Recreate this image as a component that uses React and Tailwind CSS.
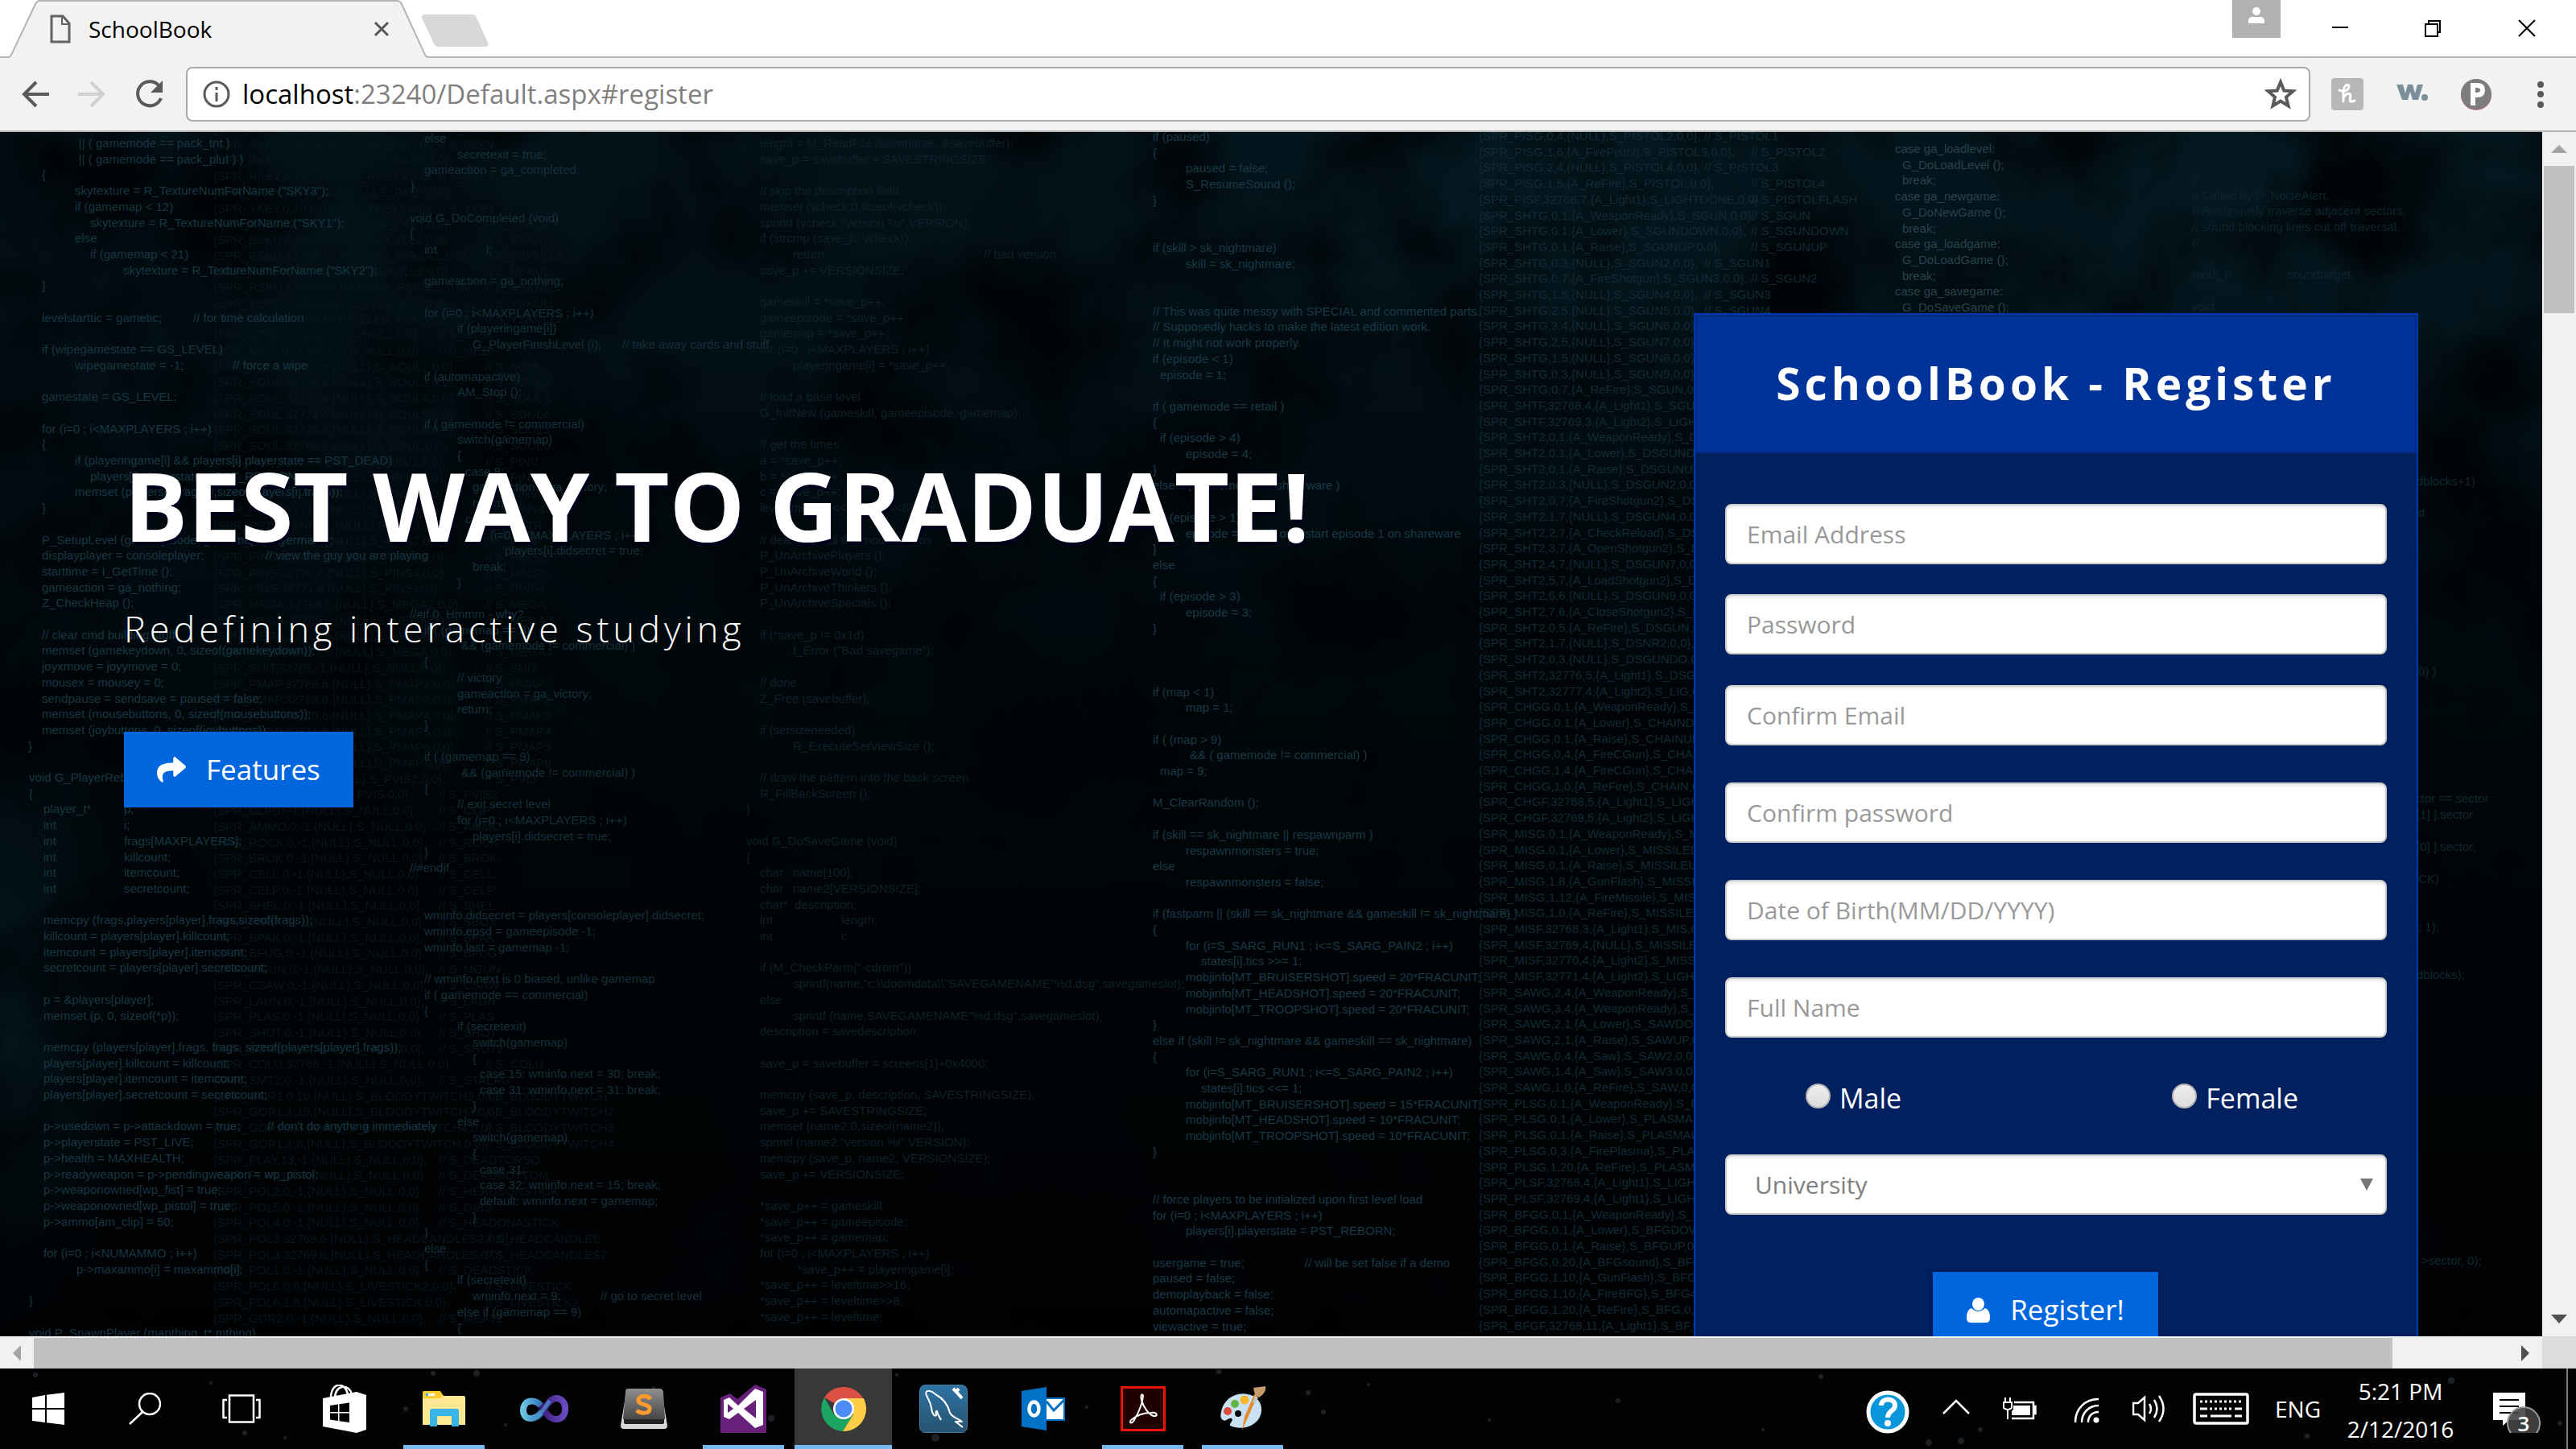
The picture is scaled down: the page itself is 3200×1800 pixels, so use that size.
import React from "react";
import { FaShare, FaUser } from "react-icons/fa";

/* ---------- code wallpaper ---------- */

// "~n~" moves the pen to n pixels from the column's left edge
const colGame = [
  "           || ( gamemode == pack_tnt )",
  "           || ( gamemode == pack_plut ) )",
  "{",
  '~41~skytexture = R_TextureNumForName ("SKY3");',
  "~41~if (gamemap < 12)",
  '~60~skytexture = R_TextureNumForName ("SKY1");',
  "~41~else",
  "~60~if (gamemap < 21)",
  '~101~skytexture = R_TextureNumForName ("SKY2");',
  "}",
  "",
  "levelstarttic = gametic;~188~// for time calculation",
  "",
  "if (wipegamestate == GS_LEVEL)",
  "~41~wipegamestate = -1;~237~// force a wipe",
  "",
  "gamestate = GS_LEVEL;",
  "",
  "for (i=0 ; i<MAXPLAYERS ; i++)",
  "{",
  "~41~if (playeringame[i] && players[i].playerstate == PST_DEAD)",
  "~60~players[i].playerstate = PST_REBORN;",
  "~41~memset (players[i].frags,0,sizeof(players[i].frags));",
  "}",
  "",
  "P_SetupLevel (gameepisode, gamemap, playermask);",
  "displayplayer = consoleplayer;~278~// view the guy you are playing",
  "starttime = I_GetTime ();",
  "gameaction = ga_nothing;",
  "Z_CheckHeap ();",
  "",
  "// clear cmd building stuff",
  "memset (gamekeydown, 0, sizeof(gamekeydown));",
  "joyxmove = joyymove = 0;",
  "mousex = mousey = 0;",
  "sendpause = sendsave = paused = false;",
  "memset (mousebuttons, 0, sizeof(mousebuttons));",
  "memset (joybuttons, 0, sizeof(joybuttons));",
  "~-17~}",
  "",
  "~-16~void G_PlayerReborn (int player)",
  "~-16~{",
  "~2~player_t*~102~p;",
  "~2~int~102~i;",
  "~2~int~102~frags[MAXPLAYERS];",
  "~2~int~102~killcount;",
  "~2~int~102~itemcount;",
  "~2~int~102~secretcount;",
  "",
  "~2~memcpy (frags,players[player].frags,sizeof(frags));",
  "~2~killcount = players[player].killcount;",
  "~2~itemcount = players[player].itemcount;",
  "~2~secretcount = players[player].secretcount;",
  "",
  "~2~p = &players[player];",
  "~2~memset (p, 0, sizeof(*p));",
  "",
  "~2~memcpy (players[player].frags, frags, sizeof(players[player].frags));",
  "~2~players[player].killcount = killcount;",
  "~2~players[player].itemcount = itemcount;",
  "~2~players[player].secretcount = secretcount;",
  "",
  "~2~p->usedown = p->attackdown = true;~280~// don't do anything immediately",
  "~2~p->playerstate = PST_LIVE;",
  "~2~p->health = MAXHEALTH;",
  "~2~p->readyweapon = p->pendingweapon = wp_pistol;",
  "~2~p->weaponowned[wp_fist] = true;",
  "~2~p->weaponowned[wp_pistol] = true;",
  "~2~p->ammo[am_clip] = 50;",
  "",
  "~2~for (i=0 ; i<NUMAMMO ; i++)",
  "~43~p->maxammo[i] = maxammo[i];",
  "",
  "~-16~}",
  "",
  "~-16~void P_SpawnPlayer (mapthing_t* mthing)",
];

const colFinish = [
  "else",
  "~41~secretexit = true;",
  "gameaction = ga_completed;",
  "~-17~}",
  "",
  "~-18~void G_DoCompleted (void)",
  "~-18~{",
  "int~77~i;",
  "",
  "gameaction = ga_nothing;",
  "",
  "for (i=0 ; i<MAXPLAYERS ; i++)",
  "~41~if (playeringame[i])",
  "~60~G_PlayerFinishLevel (i);~246~// take away cards and stuff",
  "",
  "if (automapactive)",
  "~41~AM_Stop ();",
  "",
  "if ( gamemode != commercial)",
  "~41~switch(gamemap)",
  "~41~{",
  "~51~case 8:",
  "~60~gameaction = ga_victory;",
  "~60~return;",
  "~51~case 9:",
  "~60~for (i=0 ; i<MAXPLAYERS ; i++)",
  "~100~players[i].didsecret = true;",
  "~60~break;",
  "~41~}",
  "",
  "~-18~//#if 0  Hmmm - why?",
  "if ( (gamemap == 8)",
  "~46~&& (gamemode != commercial) )",
  "{",
  "~41~// victory",
  "~41~gameaction = ga_victory;",
  "~41~return;",
  "}",
  "",
  "if ( (gamemap == 9)",
  "~46~&& (gamemode != commercial) )",
  "{",
  "~41~// exit secret level",
  "~41~for (i=0 ; i<MAXPLAYERS ; i++)",
  "~60~players[i].didsecret = true;",
  "}",
  "~-18~//#endif",
  "",
  "",
  "wminfo.didsecret = players[consoleplayer].didsecret;",
  "wminfo.epsd = gameepisode -1;",
  "wminfo.last = gamemap -1;",
  "",
  "// wminfo.next is 0 biased, unlike gamemap",
  "if ( gamemode == commercial)",
  "{",
  "~41~if (secretexit)",
  "~60~switch(gamemap)",
  "~60~{",
  "~69~case 15: wminfo.next = 30; break;",
  "~69~case 31: wminfo.next = 31; break;",
  "~60~}",
  "~41~else",
  "~60~switch(gamemap)",
  "~60~{",
  "~69~case 31:",
  "~69~case 32: wminfo.next = 15; break;",
  "~69~default: wminfo.next = gamemap;",
  "~60~}",
  "}",
  "else",
  "{",
  "~41~if (secretexit)",
  "~60~wminfo.next = 9;~219~// go to secret level",
  "~41~else if (gamemap == 9)",
  "~41~{",
];

const colSave = [
  "length = M_ReadFile (savename, &savebuffer);",
  "save_p = savebuffer + SAVESTRINGSIZE;",
  "",
  "// skip the description field",
  "memset (vcheck,0,sizeof(vcheck));",
  'sprintf (vcheck,"version %i",VERSION);',
  "if (strcmp (save_p, vcheck))",
  "~41~return;~278~// bad version",
  "save_p += VERSIONSIZE;",
  "",
  "gameskill = *save_p++;",
  "gameepisode = *save_p++;",
  "gamemap = *save_p++;",
  "for (i=0 ; i<MAXPLAYERS ; i++)",
  "~41~playeringame[i] = *save_p++;",
  "",
  "// load a base level",
  "G_InitNew (gameskill, gameepisode, gamemap);",
  "",
  "// get the times",
  "a = *save_p++;",
  "b = *save_p++;",
  "c = *save_p++;",
  "leveltime = (a<<16) + (b<<8) + c;",
  "",
  "// dearchive all the modifications",
  "P_UnArchivePlayers ();",
  "P_UnArchiveWorld ();",
  "P_UnArchiveThinkers ();",
  "P_UnArchiveSpecials ();",
  "",
  "if (*save_p != 0x1d)",
  '~41~I_Error ("Bad savegame");',
  "",
  "// done",
  "Z_Free (savebuffer);",
  "",
  "if (setsizeneeded)",
  "~41~R_ExecuteSetViewSize ();",
  "",
  "// draw the pattern into the back screen",
  "R_FillBackScreen ();",
  "~-17~}",
  "",
  "~-17~void G_DoSaveGame (void)",
  "~-17~{",
  "char~41~name[100];",
  "char~41~name2[VERSIONSIZE];",
  "char*  description;",
  "int~101~length;",
  "int~101~i;",
  "",
  'if (M_CheckParm("-cdrom"))',
  '~41~sprintf(name,"c:\\\\doomdata\\\\"SAVEGAMENAME"%d.dsg",savegameslot);',
  "else",
  '~41~sprintf (name,SAVEGAMENAME"%d.dsg",savegameslot);',
  "description = savedescription;",
  "",
  "save_p = savebuffer = screens[1]+0x4000;",
  "",
  "memcpy (save_p, description, SAVESTRINGSIZE);",
  "save_p += SAVESTRINGSIZE;",
  "memset (name2,0,sizeof(name2));",
  'sprintf (name2,"version %i",VERSION);',
  "memcpy (save_p, name2, VERSIONSIZE);",
  "save_p += VERSIONSIZE;",
  "",
  "*save_p++ = gameskill;",
  "*save_p++ = gameepisode;",
  "*save_p++ = gamemap;",
  "for (i=0 ; i<MAXPLAYERS ; i++)",
  "~46~*save_p++ = playeringame[i];",
  "*save_p++ = leveltime>>16;",
  "*save_p++ = leveltime>>8;",
  "*save_p++ = leveltime;",
];

const colSkill = [
  "if (paused)",
  "{",
  "~41~paused = false;",
  "~41~S_ResumeSound ();",
  "}",
  "",
  "",
  "if (skill > sk_nightmare)",
  "~41~skill = sk_nightmare;",
  "",
  "",
  "// This was quite messy with SPECIAL and commented parts.",
  "// Supposedly hacks to make the latest edition work.",
  "// It might not work properly.",
  "if (episode < 1)",
  "~9~episode = 1;",
  "",
  "if ( gamemode == retail )",
  "{",
  "~9~if (episode > 4)",
  "~41~episode = 4;",
  "}",
  "else if ( gamemode == shareware )",
  "{",
  "~9~if (episode > 1)",
  "~41~episode = 1;~145~// only start episode 1 on shareware",
  "}",
  "else",
  "{",
  "~9~if (episode > 3)",
  "~41~episode = 3;",
  "}",
  "",
  "",
  "",
  "if (map < 1)",
  "~41~map = 1;",
  "",
  "if ( (map > 9)",
  "~46~&& ( gamemode != commercial) )",
  "~9~map = 9;",
  "",
  "M_ClearRandom ();",
  "",
  "if (skill == sk_nightmare || respawnparm )",
  "~41~respawnmonsters = true;",
  "else",
  "~41~respawnmonsters = false;",
  "",
  "if (fastparm || (skill == sk_nightmare && gameskill != sk_nightmare) )",
  "{",
  "~41~for (i=S_SARG_RUN1 ; i<=S_SARG_PAIN2 ; i++)",
  "~60~states[i].tics >>= 1;",
  "~41~mobjinfo[MT_BRUISERSHOT].speed = 20*FRACUNIT;",
  "~41~mobjinfo[MT_HEADSHOT].speed = 20*FRACUNIT;",
  "~41~mobjinfo[MT_TROOPSHOT].speed = 20*FRACUNIT;",
  "}",
  "else if (skill != sk_nightmare && gameskill == sk_nightmare)",
  "{",
  "~41~for (i=S_SARG_RUN1 ; i<=S_SARG_PAIN2 ; i++)",
  "~60~states[i].tics <<= 1;",
  "~41~mobjinfo[MT_BRUISERSHOT].speed = 15*FRACUNIT;",
  "~41~mobjinfo[MT_HEADSHOT].speed = 10*FRACUNIT;",
  "~41~mobjinfo[MT_TROOPSHOT].speed = 10*FRACUNIT;",
  "}",
  "",
  "",
  "// force players to be initialized upon first level load",
  "for (i=0 ; i<MAXPLAYERS ; i++)",
  "~41~players[i].playerstate = PST_REBORN;",
  "",
  "usergame = true;~189~// will be set false if a demo",
  "paused = false;",
  "demoplayback = false;",
  "automapactive = false;",
  "viewactive = true;",
];

const colCase = [
  "case ga_loadlevel:",
  "~9~G_DoLoadLevel ();",
  "~9~break;",
  "case ga_newgame:",
  "~9~G_DoNewGame ();",
  "~9~break;",
  "case ga_loadgame:",
  "~9~G_DoLoadGame ();",
  "~9~break;",
  "case ga_savegame:",
  "~9~G_DoSaveGame ();",
];

const colNoise = [
  "//",
  "// Called by P_NoiseAlert.",
  "// Recursively traverse adjacent sectors,",
  "// sound blocking lines cut off traversal.",
  "//",
  "",
  "mobj_t*~118~soundtarget;",
  "",
  "void",
];

const spriteRow = (row) => {
  const [head, action, next, label] = row.split(" ");
  const body = `{SPR_${head},{${action}},S_${next},0,0},`;
  return label ? `${body}~${body.length > 36 ? 338 : 280}~// S_${label}` : body;
};

const colItems = (
  "BON2,1,6 NULL BON2B BON2A|BKEY,0,10 NULL BKEY2 BKEY|BKEY,32769,10 NULL BKEY BKEY2|RKEY,0,10 NULL RKEY2 RKEY|RKEY,32769,10 NULL RKEY RKEY2|YKEY,0,10 NULL YKEY2 YKEY|YKEY,32769,10 NULL YKEY YKEY2|BSKU,0,10 NULL BSKULL2 BSKULL|BSKU,32769,10 NULL BSKULL BSKULL2|RSKU,0,10 NULL RSKULL2 RSKULL|RSKU,32769,10 NULL RSKULL RSKULL2|YSKU,0,10 NULL YSKULL2 YSKULL|YSKU,32769,10 NULL YSKULL YSKULL2|STIM,0,-1 NULL NULL STIM|MEDI,0,-1 NULL NULL MEDI|SOUL,32768,6 NULL SOUL2 SOUL|SOUL,32769,6 NULL SOUL3 SOUL2|SOUL,32770,6 NULL SOUL4 SOUL3|SOUL,32771,6 NULL SOUL5 SOUL4|SOUL,32770,6 NULL SOUL6 SOUL5|SOUL,32769,6 NULL SOUL SOUL6|PINV,32768,6 NULL PINV2 PINV|PINV,32769,6 NULL PINV3 PINV2|PINV,32770,6 NULL PINV4 PINV3|PINV,32771,6 NULL PINV PINV4|PSTR,32768,-1 NULL NULL PSTR|PINS,32768,6 NULL PINS2 PINS|PINS,32769,6 NULL PINS3 PINS2|PINS,32770,6 NULL PINS4 PINS3|PINS,32771,6 NULL PINS PINS4|MEGA,32768,6 NULL MEGA2 MEGA|MEGA,32769,6 NULL MEGA3 MEGA2|MEGA,32770,6 NULL MEGA4 MEGA3|MEGA,32771,6 NULL MEGA MEGA4|SUIT,32768,-1 NULL NULL SUIT|PMAP,32768,6 NULL PMAP2 PMAP|PMAP,32769,6 NULL PMAP3 PMAP2|PMAP,32770,6 NULL PMAP4 PMAP3|PMAP,32771,6 NULL PMAP5 PMAP4|PMAP,32770,6 NULL PMAP6 PMAP5|PMAP,32769,6 NULL PMAP PMAP6|PVIS,32768,6 NULL PVIS2 PVIS|PVIS,1,6 NULL PVIS PVIS2|CLIP,0,-1 NULL NULL CLIP|AMMO,0,-1 NULL NULL AMMO|ROCK,0,-1 NULL NULL ROCK|BROK,0,-1 NULL NULL BROK|CELL,0,-1 NULL NULL CELL|CELP,0,-1 NULL NULL CELP|SHEL,0,-1 NULL NULL SHEL|SBOX,0,-1 NULL NULL SBOX|BPAK,0,-1 NULL NULL BPAK|BFUG,0,-1 NULL NULL BFUG|MGUN,0,-1 NULL NULL MGUN|CSAW,0,-1 NULL NULL CSAW|LAUN,0,-1 NULL NULL LAUN|PLAS,0,-1 NULL NULL PLAS|SHOT,0,-1 NULL NULL SHOT|SGN2,0,-1 NULL NULL SHOT2|COLU,32768,-1 NULL NULL COLU|SMT2,0,-1 NULL NULL STALAG|GOR1,0,10 NULL BLOODYTWITCH2 BLOODYTWITCH|GOR1,1,15 NULL BLOODYTWITCH3 BLOODYTWITCH2|GOR1,2,8 NULL BLOODYTWITCH4 BLOODYTWITCH3|GOR1,1,6 NULL BLOODYTWITCH BLOODYTWITCH4|PLAY,13,-1 NULL NULL DEADTORSO|PLAY,18,-1 NULL NULL DEADBOTTOM|POL2,0,-1 NULL NULL HEADSONSTICK|POL5,0,-1 NULL NULL GIBS|POL4,0,-1 NULL NULL HEADONASTICK|POL3,32768,6 NULL HEADCANDLES2 HEADCANDLES|POL3,32769,6 NULL HEADCANDLES HEADCANDLES2|POL1,0,-1 NULL NULL DEADSTICK|POL6,0,6 NULL LIVESTICK2 LIVESTICK|POL6,1,8 NULL LIVESTICK LIVESTICK2|GOR2,0,-1 NULL NULL MEAT2"
)
  .split("|")
  .map(spriteRow);

const colWeapons = (
  "PISG,0,4 NULL PISTOL2 PISTOL1|PISG,1,6 A_FirePistol PISTOL3 PISTOL2|PISG,2,4 NULL PISTOL4 PISTOL3|PISG,1,5 A_ReFire PISTOL PISTOL4|PISF,32768,7 A_Light1 LIGHTDONE PISTOLFLASH|SHTG,0,1 A_WeaponReady SGUN SGUN|SHTG,0,1 A_Lower SGUNDOWN SGUNDOWN|SHTG,0,1 A_Raise SGUNUP SGUNUP|SHTG,0,3 NULL SGUN2 SGUN1|SHTG,0,7 A_FireShotgun SGUN3 SGUN2|SHTG,1,5 NULL SGUN4 SGUN3|SHTG,2,5 NULL SGUN5 SGUN4|SHTG,3,4 NULL SGUN6|SHTG,2,5 NULL SGUN7|SHTG,1,5 NULL SGUN8|SHTG,0,3 NULL SGUN9|SHTG,0,7 A_ReFire SGUN|SHTF,32768,4 A_Light1 SGUNF|SHTF,32769,3 A_Light2 LIGHTD|SHT2,0,1 A_WeaponReady DS|SHT2,0,1 A_Lower DSGUND|SHT2,0,1 A_Raise DSGUNUP|SHT2,0,3 NULL DSGUN2|SHT2,0,7 A_FireShotgun2 DS|SHT2,1,7 NULL DSGUN4|SHT2,2,7 A_CheckReload DS|SHT2,3,7 A_OpenShotgun2 D|SHT2,4,7 NULL DSGUN7|SHT2,5,7 A_LoadShotgun2 DS|SHT2,6,6 NULL DSGUN9|SHT2,7,6 A_CloseShotgun2 D|SHT2,0,5 A_ReFire DSGUN|SHT2,1,7 NULL DSNR2|SHT2,0,3 NULL DSGUNDO|SHT2,32776,5 A_Light1 DSG|SHT2,32777,4 A_Light2 LIG|CHGG,0,1 A_WeaponReady C|CHGG,0,1 A_Lower CHAIND|CHGG,0,1 A_Raise CHAINUP|CHGG,0,4 A_FireCGun CHAIN|CHGG,1,4 A_FireCGun CHAI|CHGG,1,0 A_ReFire CHAIN|CHGF,32768,5 A_Light1 LIGH|CHGF,32769,5 A_Light2 LIGH|MISG,0,1 A_WeaponReady M|MISG,0,1 A_Lower MISSILED|MISG,0,1 A_Raise MISSILEU|MISG,1,8 A_GunFlash MISSI|MISG,1,12 A_FireMissile MIS|MISG,1,0 A_ReFire MISSILE|MISF,32768,3 A_Light1 MIS|MISF,32769,4 NULL MISSILE|MISF,32770,4 A_Light2 MISS|MISF,32771,4 A_Light2 LIGH|SAWG,2,4 A_WeaponReady S|SAWG,3,4 A_WeaponReady S|SAWG,2,1 A_Lower SAWDO|SAWG,2,1 A_Raise SAWUP|SAWG,0,4 A_Saw SAW2|SAWG,1,4 A_Saw SAW3|SAWG,1,0 A_ReFire SAW|PLSG,0,1 A_WeaponReady PL|PLSG,0,1 A_Lower PLASMA|PLSG,0,1 A_Raise PLASMAU|PLSG,0,3 A_FirePlasma PLAS|PLSG,1,20 A_ReFire PLASM|PLSF,32768,4 A_Light1 LIGH|PLSF,32769,4 A_Light1 LIGH|BFGG,0,1 A_WeaponReady B|BFGG,0,1 A_Lower BFGDOW|BFGG,0,1 A_Raise BFGUP|BFGG,0,20 A_BFGsound BFG|BFGG,1,10 A_GunFlash BFG3|BFGG,1,10 A_FireBFG BFG4|BFGG,1,20 A_ReFire BFG|BFGF,32768,11 A_Light1 BF"
)
  .split("|")
  .map(spriteRow);

const edgeBits = [
  [3002, 439, "dblocks+1)"],
  [3004, 478, "d"],
  [3004, 675, "0) )"],
  [3000, 833, "ctor == sector"],
  [3002, 853, "[1] ].sector"],
  [3002, 893, "[0] ].sector;"],
  [3004, 933, "CK)"],
  [3004, 993, "; 1);"],
  [3002, 1052, "dblocks);"],
  [3008, 1407, ">sector, 0);"],
];

function CodeColumn({ x, y, fill, lines }) {
  return (
    <g fill={fill}>
      {lines.map((line, i) => {
        const parts = line.split(/~(-?\d+)~/);
        return parts.map((part, k) =>
          k % 2 === 0 && part.trim() ? (
            <text
              key={`${i}-${k}`}
              x={x + (k ? Number(parts[k - 1]) : 0)}
              y={y + Math.round(i * 19.7)}
              className="whitespace-pre"
            >
              {part}
            </text>
          ) : null
        );
      })}
    </g>
  );
}

function CodeWallpaper() {
  return (
    <svg
      aria-hidden="true"
      className="absolute inset-0 h-full w-full"
      viewBox="0 0 3158 1496"
      preserveAspectRatio="xMinYMin slice"
      fontFamily='"Liberation Sans Narrow", "Liberation Sans", sans-serif'
      fontSize="15"
    >
      <defs>
        <linearGradient id="base" x1="0" y1="0" x2="0" y2="1">
          <stop offset="0" stopColor="#03131a" />
          <stop offset="0.35" stopColor="#010b10" />
          <stop offset="0.65" stopColor="#000406" />
          <stop offset="1" stopColor="#000102" />
        </linearGradient>
        <radialGradient id="glow">
          <stop offset="0" stopColor="#051c25" stopOpacity="0.8" />
          <stop offset="1" stopColor="#051c25" stopOpacity="0" />
        </radialGradient>
        <filter id="mottle" x="0" y="0" width="1" height="1" colorInterpolationFilters="sRGB">
          <feTurbulence type="fractalNoise" baseFrequency="0.006" numOctaves="6" seed="8" />
          <feColorMatrix values="0 0 0 0 0  0 0 0 0 0.01  0 0 0 0 0.02  2.4 0 0 0 -0.9" />
        </filter>
      </defs>
      <rect width="3158" height="1496" fill="url(#base)" />
      <ellipse cx="2850" cy="100" rx="700" ry="360" fill="url(#glow)" />
      <ellipse cx="1900" cy="60" rx="500" ry="260" fill="url(#glow)" />
      <ellipse cx="0" cy="1080" rx="180" ry="420" fill="url(#glow)" />
      <rect width="3158" height="1496" filter="url(#mottle)" />
      <CodeColumn x={265} y={1} fill="#08151b" lines={colItems} />
      <CodeColumn x={52} y={19} fill="#183642" lines={colGame} />
      <CodeColumn x={527} y={13} fill="#152f3a" lines={colFinish} />
      <CodeColumn x={944} y={19} fill="#0e2029" lines={colSave} />
      <CodeColumn x={1432} y={11} fill="#1a3946" lines={colSkill} />
      <CodeColumn x={1837} y={10} fill="#122a34" lines={colWeapons} />
      <CodeColumn x={2354} y={26} fill="#28434b" lines={colCase} />
      <CodeColumn x={2723} y={64} fill="#0c242d" lines={colNoise} />
      <g fill="#10272f">
        {edgeBits.map(([x, y, t]) => (
          <text key={y} x={x} y={y}>
            {t}
          </text>
        ))}
      </g>
    </svg>
  );
}

/* ---------- browser chrome ---------- */

function TabStrip() {
  return (
    <header className="flex h-[72px] shrink-0 items-stretch justify-between bg-white">
      <div className="relative flex flex-1">
        <svg aria-hidden="true" className="absolute inset-0 h-full w-[620px]" viewBox="0 0 620 72">
          <path d="M0 71H10Q13 71 14 68L44 5Q46 1 50 1H493Q497 1 499 5L528 68Q529 71 533 71V72H0Z" fill="#f2f2f2" />
          <path d="M0 71H10Q13 71 14 68L44 5Q46 1 50 1H493Q497 1 499 5L528 68Q529 71 533 71H620" fill="none" stroke="#b4b4b4" strokeWidth="2" />
          <path d="M528 18H587Q591 18 592 22L606 53Q608 58 603 58H545Q541 58 539 54L524 22Q523 18 528 18Z" fill="#d8d8d8" />
        </svg>
        <div className="relative flex w-[520px] items-center pl-[62px] pr-9">
          <svg aria-hidden="true" className="h-9 w-[26px]" viewBox="0 0 26 36" fill="none" stroke="#636363" strokeWidth="3">
            <path d="M2 2H16L24 11V34H2Z" />
            <path d="M15 2V12H24" strokeWidth="2" />
          </svg>
          <h1 className="ml-[22px] flex-1 text-[28px] text-black">SchoolBook</h1>
          <button aria-label="Close tab" className="p-0">
            <svg className="h-5 w-5" viewBox="0 0 20 20" stroke="#555" strokeWidth="3">
              <path d="M2 2L18 18M18 2L2 18" />
            </svg>
          </button>
        </div>
        <div className="flex-1 border-b-2 border-[#b4b4b4]" />
      </div>
      <div className="flex border-b-2 border-[#b4b4b4]">
        <button aria-label="Profile" className="mr-[7px] flex h-[47px] w-[60px] justify-center bg-[#b1b1b1] pt-2">
          <svg className="h-6 w-6" viewBox="0 0 24 24" fill="#fff">
            <circle cx="12" cy="6" r="5" />
            <path d="M2 21V18Q2 14 6 13H18Q22 14 22 18V21Z" />
          </svg>
        </button>
        <button aria-label="Minimize" className="grid w-[134px] place-items-center">
          <svg className="h-6 w-6" viewBox="0 0 24 24" stroke="#000" strokeWidth="2">
            <path d="M2 11H22" />
          </svg>
        </button>
        <button aria-label="Restore" className="grid w-[96px] place-items-center">
          <svg className="h-6 w-6" viewBox="0 0 24 24" stroke="#000" strokeWidth="2" fill="none">
            <path d="M3 7H18V22H3ZM7 7V3H21V17H18" />
          </svg>
        </button>
        <button aria-label="Close" className="grid w-[130px] place-items-center pl-2">
          <svg className="h-6 w-6" viewBox="0 0 24 24" stroke="#000" strokeWidth="2">
            <path d="M2 2L22 22M22 2L2 22" />
          </svg>
        </button>
      </div>
    </header>
  );
}

function Toolbar() {
  return (
    <nav aria-label="Browser toolbar" className="flex h-[92px] shrink-0 items-center border-b-2 border-[#b5b5b5] bg-[#f2f2f2] pl-[26px] pr-6">
      <div className="flex w-[205px] items-center gap-[34px]">
        <button aria-label="Back">
          <svg className="h-9 w-9" viewBox="0 0 36 36" fill="none" stroke="#5a5a5a" strokeWidth="4">
            <path d="M35 18H5M19 3L4 18L19 33" />
          </svg>
        </button>
        <button aria-label="Forward" disabled>
          <svg className="h-9 w-9" viewBox="0 0 36 36" fill="none" stroke="#d0d0d0" strokeWidth="4">
            <path d="M1 18H31M17 3L32 18L17 33" />
          </svg>
        </button>
        <button aria-label="Reload">
          <svg className="h-10 w-10" viewBox="0 0 40 40" fill="none" stroke="#5a5a5a" strokeWidth="4">
            <path d="M31 9A15 15 0 1 0 34 25" />
            <path d="M36 3V18H21Z" fill="#5a5a5a" stroke="none" />
          </svg>
        </button>
      </div>
      <div className="relative flex h-[68px] flex-1 items-center rounded-lg border-2 border-[#a9a9a9] bg-white pl-[18px] pr-[15px]">
        <svg aria-hidden="true" className="h-9 w-9" viewBox="0 0 36 36" fill="none" stroke="#5a5a5a" strokeWidth="3">
          <circle cx="18" cy="18" r="15" />
          <path d="M18 16V27M18 9V13" />
        </svg>
        <div className="relative ml-[14px] flex-1 text-[33px] leading-[60px]">
          <input aria-label="Address" className="w-full bg-transparent text-transparent outline-none" />
          <div className="pointer-events-none absolute inset-0 whitespace-nowrap text-[#808080]">
            <span className="text-black">localhost</span>:23240/Default.aspx#register
          </div>
        </div>
        <button aria-label="Bookmark this page">
          <svg className="h-10 w-10" viewBox="0 0 40 40" fill="none" stroke="#5a5a5a" strokeWidth="4">
            <path d="M20 5L24.300 15.500L35.500 16.300L27 23.600L29.600 34.500L20 28.600L10.400 34.500L13 23.600L4.500 16.300L15.700 15.500Z" />
          </svg>
        </button>
      </div>
      <div className="flex items-center">
        <button aria-label="Honey" className="ml-[26px] h-10 w-10 rounded-[4px] bg-[#b5b7b8]">
          <svg viewBox="0 0 40 40" fill="none" stroke="#fff" strokeWidth="3" strokeLinecap="round">
            <path d="M10 15C16 18 22 15 22 10C21 6 15 9 15 18V29M15 25C17 19 24 17 24 22C23 28 22 31 29 28" />
          </svg>
        </button>
        <button aria-label="Web of Trust" className="ml-10 h-10 w-10">
          <svg viewBox="0 0 40 40">
            <path d="M1 8H9L12 19L15 8H21L24 19L27 8H34L28 27H21L18 17L15 27H8Z" fill="#7a8f9a" />
            <circle cx="36" cy="24" r="4" fill="#7a8f9a" />
          </svg>
        </button>
        <button aria-label="Extension P" className="ml-10 h-10 w-10">
          <svg viewBox="0 0 40 40">
            <circle cx="20" cy="21" r="19" fill="#b8688c" />
            <circle cx="20" cy="20" r="19" fill="#7d7d7d" />
            <path d="M16 34V9H21Q28 9 28 15Q28 21 21 21H16" fill="none" stroke="#fff" strokeWidth="6" />
          </svg>
        </button>
        <button aria-label="Menu" className="ml-10 h-10 w-10">
          <svg viewBox="0 0 40 40" fill="#5a5a5a">
            <circle cx="20" cy="8" r="4" />
            <circle cx="20" cy="20" r="4" />
            <circle cx="20" cy="33" r="4" />
          </svg>
        </button>
      </div>
    </nav>
  );
}

function Arrow({ d, fill }) {
  return (
    <svg aria-hidden="true" className="h-5 w-5" viewBox="0 0 20 20" fill={fill}>
      <path d={d} />
    </svg>
  );
}

function VerticalScrollbar() {
  return (
    <div className="flex w-[42px] shrink-0 flex-col bg-[#f1f1f1]">
      <button aria-label="Scroll up" className="grid h-[42px] place-items-center">
        <Arrow d="M0 15L10 5L20 15Z" fill="#a3a3a3" />
      </button>
      <div className="mx-0.5 h-[183px] bg-[#c1c1c1]" />
      <button aria-label="Scroll down" className="mt-auto grid h-[42px] place-items-center">
        <Arrow d="M0 4H20L10 15Z" fill="#505050" />
      </button>
    </div>
  );
}

function HorizontalScrollbar() {
  return (
    <div className="flex h-10 shrink-0 bg-[#f1f1f1]">
      <button aria-label="Scroll left" className="grid w-[42px] place-items-center pt-0.5">
        <Arrow d="M15 0V20L5 10Z" fill="#a3a3a3" />
      </button>
      <div className="flex flex-1 pt-0.5">
        <div className="w-[95.300%] bg-[#c1c1c1]" />
      </div>
      <button aria-label="Scroll right" className="grid w-[42px] place-items-center pt-0.5">
        <Arrow d="M5 0V20L15 10Z" fill="#505050" />
      </button>
      <div className="w-[42px] bg-[#dcdcdc]" />
    </div>
  );
}

/* ---------- page ---------- */

const fieldBox =
  "h-[75px] w-full rounded-lg border-2 border-[#ccc] bg-white text-[30px] shadow-[inset_0_3px_3px_rgba(0,0,0,0.08)] outline-none";

function TextField({ label, type = "text", className }) {
  return (
    <input
      aria-label={label}
      placeholder={label}
      type={type}
      className={`${fieldBox} px-[25px] placeholder:text-[#999] ${className}`}
    />
  );
}

function GenderOption({ label }) {
  return (
    <label className="flex items-center gap-[11px] text-[34px] leading-[46px] text-white">
      <input
        type="radio"
        name="gender"
        className="mb-1 h-[31px] w-[31px] appearance-none rounded-full border-2 border-[#b5b5b5] bg-linear-to-b from-[#eee] to-[#dcdcdc]"
      />
      {label}
    </label>
  );
}

function RegisterCard() {
  return (
    <form className="h-[1400px] w-[900px] shrink-0 border-2 border-[#0038b0] bg-[#002060]">
      <h2 className="border-2 border-[#002a80] bg-[#003399] pb-11 pt-[42px] text-center text-[55px] font-bold leading-[82px] tracking-[5px] text-white">
        SchoolBook - Register
      </h2>
      <div className="flex flex-col px-[37px] pt-[63px]">
        <TextField label="Email Address" type="email" className="mb-[37px]" />
        <TextField label="Password" type="password" className="mb-[38px]" />
        <TextField label="Confirm Email" type="email" className="mb-[46px]" />
        <TextField label="Confirm password" type="password" className="mb-[46px]" />
        <TextField label="Date of Birth(MM/DD/YYYY)" className="mb-[46px]" />
        <TextField label="Full Name" />
        <div className="flex h-[145px] items-center justify-between pl-[100px] pr-[110px] pt-1">
          <GenderOption label="Male" />
          <GenderOption label="Female" />
        </div>
        <div className="relative">
          <select aria-label="University" className={`${fieldBox} appearance-none pl-[35px] pr-14 text-[#808080]`}>
            <option>University</option>
          </select>
          <svg aria-hidden="true" className="pointer-events-none absolute right-[17px] top-[30px] h-[15px] w-4" viewBox="0 0 16 15" fill="#777">
            <path d="M0 0H16L8 15Z" />
          </svg>
        </div>
        <button
          type="submit"
          className="mr-[26px] mt-[71px] flex h-[94px] items-center gap-[25px] self-center bg-[#0066dd] px-[42px] text-[35px] text-white shadow-[0_2px_6px_rgba(0,0,0,0.4)]"
        >
          <svg aria-hidden="true" className="h-[31px] w-[29px]" viewBox="0 0 29 31" fill="#fff">
            <ellipse cx="14.500" cy="8" rx="7.500" ry="8" />
            <path d="M6 13Q14 21 23 13Q29 15 29 25Q29 31 24 31H5Q0 31 0 25Q0 15 6 13Z" />
          </svg>
          Register!
        </button>
      </div>
    </form>
  );
}

function Page() {
  return (
    <main className="relative min-w-0 flex-1 overflow-hidden bg-black">
      <CodeWallpaper />
      <div className="relative flex items-start justify-between px-[154px]">
        <section className="pt-[400px] text-white">
          <h2 className="whitespace-nowrap text-[118px] font-bold leading-[128px] drop-shadow-[2px_4px_0_#00001c]">
            BEST WAY TO GRADUATE!
          </h2>
          <p className="mt-[59px] text-[45px] font-light leading-[60px] tracking-[5px]">Redefining interactive studying</p>
          <a href="#features" className="mt-[98px] inline-flex h-[94px] items-center gap-[25px] bg-[#0066dd] px-[41px] text-[35px]">
            <FaShare className="h-9 w-9" />
            Features
          </a>
        </section>
        <div className="pt-[225px]">
          <RegisterCard />
        </div>
      </div>
    </main>
  );
}

/* ---------- taskbar ---------- */

const WindowsIcon = () => (
  <svg className="h-10 w-10" viewBox="0 0 40 40" fill="#fff">
    <path d="M0 6L16 3V19H0ZM18 2.700L40 0V19H18ZM0 21H16V37L0 35ZM18 21H40V40L18 37.300Z" />
  </svg>
);
const SearchIcon = () => (
  <svg className="h-10 w-10" viewBox="0 0 40 40" fill="none" stroke="#fff" strokeWidth="2.500">
    <circle cx="26" cy="14" r="13" />
    <path d="M17 24L1 39" />
  </svg>
);
const TaskViewIcon = () => (
  <svg className="h-9 w-12" viewBox="0 0 48 36" fill="none" stroke="#fff" strokeWidth="2.500">
    <path d="M9 1.500H39V34.500H9ZM6 7H1.500V29H6M42 7H46.500V29H42" />
  </svg>
);
const StoreIcon = () => (
  <svg className="h-[60px] w-[54px]" viewBox="0 0 54 60">
    <path d="M10 17C10 -4 28 -4 31 12M15 16C16 -1 33 -1 36 12" fill="none" stroke="#fff" strokeWidth="2.500" />
    <path d="M0 17L42 9L54 13V56L42 60L0 52Z" fill="#fff" />
    <path d="M9 26L19 24.500V34H9ZM20.500 24.300L33 22.500V34H20.500ZM9 35.500H19V45L9 43.500ZM20.500 35.500H33V47L20.500 45.200Z" fill="#000" />
  </svg>
);
const FolderIcon = () => (
  <svg className="h-11 w-[54px]" viewBox="0 0 54 44">
    <path d="M0 1H22L26 6H51Q53 6 53 8V42H0Z" fill="#ffe793" />
    <path d="M0 2Q0 0 2 0H22L25 5L22 9H0Z" fill="#ffcb2f" />
    <path d="M4 3H15V6H4Z" fill="#fff" />
    <path d="M4 3H7V6H4Z" fill="#39b0e5" />
    <path d="M9 44V25Q9 22 12 22H42Q45 22 45 25V44H36V31H18V44Z" fill="#39b5e8" />
  </svg>
);
const InfinityIcon = () => (
  <svg className="h-[34px] w-[60px]" viewBox="0 0 60 34" fill="none" strokeWidth="8">
    <defs>
      <linearGradient id="infCyan" x1="0" x2="1">
        <stop offset="0" stopColor="#6cc3e0" />
        <stop offset="1" stopColor="#2f6fb5" />
      </linearGradient>
      <linearGradient id="infViolet" x1="0" x2="1">
        <stop offset="0" stopColor="#3c1a7a" />
        <stop offset="1" stopColor="#6a4cc0" />
      </linearGradient>
    </defs>
    <path d="M26 13C18 4 4 6 4 19C4 31 18 33 28 20" stroke="url(#infCyan)" />
    <path d="M26 13C34 26 38 30 45 30C60 30 60 4 45 4C38 4 34 11 28 20" stroke="url(#infViolet)" />
    <path d="M16 29C24 28 30 16 37 7" stroke="#4d9bd0" strokeWidth="5" opacity="0.700" />
  </svg>
);
const SublimeIcon = () => (
  <svg className="h-[50px] w-[58px]" viewBox="0 0 58 50">
    <defs>
      <linearGradient id="sub" x1="0" y1="0" x2="0" y2="1">
        <stop offset="0" stopColor="#8f8f8f" />
        <stop offset="1" stopColor="#474747" />
      </linearGradient>
    </defs>
    <path d="M7 4L0 46Q0 50 4 50H54Q58 50 58 46L51 4Z" fill="#d8d8d8" />
    <path d="M4 37H54V42Q54 44 52 44H6Q4 44 4 42Z" fill="#222" />
    <path d="M9 0H49Q52 0 53 4L55 38H3L6 4Q6 0 9 0Z" fill="url(#sub)" />
    <path d="M37 13C33 7 21 9 22 15C23 21 36 19 36 25C36 32 24 31 20 27" fill="none" stroke="#ff9a2e" strokeWidth="5" />
  </svg>
);
const VisualStudioIcon = () => (
  <svg className="h-[60px] w-[57px]" viewBox="0 0 57 60">
    <path d="M0 16L12 11L21 18L43 0L57 6V60H0Z" fill="#68217a" />
    <path fillRule="evenodd" d="M4 19L11 16L22 26L43 5L53 9V50L43 54L22 35L11 43L4 40ZM9 24V35L16 30ZM44 19L29 30L44 42Z" fill="#fff" />
  </svg>
);
const ChromeIcon = () => (
  <svg className="h-14 w-14" viewBox="0 0 56 56">
    <path d="M28 28L4 14A28 28 0 0 1 52 15H28Z" fill="#dd5144" />
    <path d="M28 28L40 35L27 56A28 28 0 0 1 4 14L16 35Z" fill="#1da462" />
    <path d="M28 15H52.800A28 28 0 0 1 27 56L40 35Z" fill="#ffcd46" />
    <circle cx="28" cy="28" r="13" fill="#fff" />
    <circle cx="28" cy="28" r="10.500" fill="#4c8bf5" />
  </svg>
);
const MySqlIcon = () => (
  <svg className="h-[60px] w-[60px]" viewBox="0 0 60 60" fill="none" stroke="#fff" strokeWidth="2" strokeLinejoin="round">
    <defs>
      <linearGradient id="sql" x1="0" y1="0" x2="0" y2="1">
        <stop offset="0" stopColor="#2d73a3" />
        <stop offset="1" stopColor="#275370" />
      </linearGradient>
    </defs>
    <rect x="0.500" y="0.500" width="59" height="59" rx="7" fill="url(#sql)" stroke="#4d7f9f" strokeWidth="1" />
    <path d="M8 10C10 6 16 8 20 12C31 18 36 26 38 35C41 41 48 42 53 46L45 46L54 53M8 10C9 17 14 20 15 29C16 37 19 40 21 38C20 34 21 32 22 33C23 39 26 41 27 44" />
    <path d="M42 5L46 9L49 5M46 9L53 17" strokeWidth="4" />
  </svg>
);
const OutlookIcon = () => (
  <svg className="h-[54px] w-[54px]" viewBox="0 0 54 54">
    <path d="M30 13H54V42H30Z" fill="#0072c6" />
    <path d="M31 15H52V40H31Z" fill="#fff" />
    <path d="M31 18L40 29L53 16" fill="none" stroke="#0072c6" strokeWidth="3" />
    <path d="M0 5L31 0V54L0 49Z" fill="#0072c6" />
    <ellipse cx="15.500" cy="27" rx="6" ry="8.500" fill="none" stroke="#fff" strokeWidth="4.500" />
  </svg>
);
const AcrobatIcon = () => (
  <svg className="h-14 w-14" viewBox="0 0 56 56" fill="none">
    <rect x="1.500" y="1.500" width="53" height="53" fill="#230000" stroke="#ee1207" strokeWidth="3" />
    <path d="M13 42C10 46 14 48 18 40C24 30 27 20 28 12C28 9 24 10 26 17C28 26 35 35 41 37C47 38 46 32 38 33C30 33 20 36 13 42Z" stroke="#fff" strokeWidth="2" />
  </svg>
);
const PaintIcon = () => (
  <svg className="h-14 w-14" viewBox="0 0 56 56">
    <path d="M2 28C6 14 22 7 34 10C50 13 55 28 48 40C41 51 25 55 12 49C11 45 17 43 14 40C10 38 6 46 2 41C-1 38 1 32 2 28Z" fill="#c9e2f3" />
    <circle cx="22" cy="34" r="4" fill="#050505" />
    <circle cx="9" cy="31" r="5" fill="#e04a3c" />
    <circle cx="18" cy="22" r="5" fill="#62b445" />
    <circle cx="30" cy="17" r="5.500" fill="#f8b62b" />
    <path d="M46 12L27 55L30 38L42 10Z" fill="#e88a2c" />
    <path d="M43 12L47 14L43 22L40 20Z" fill="#bfc6cc" />
    <path d="M41 2L56 0Q58 7 48 14L43 11Z" fill="#c69c6d" />
  </svg>
);

const pinned = [
  { name: "Store", Icon: StoreIcon },
  { name: "File Explorer", Icon: FolderIcon, open: true },
  { name: "Visual Studio Blend", Icon: InfinityIcon },
  { name: "Sublime Text", Icon: SublimeIcon },
  { name: "Visual Studio", Icon: VisualStudioIcon, open: true },
  { name: "Chrome", Icon: ChromeIcon, active: true },
  { name: "MySQL Workbench", Icon: MySqlIcon },
  { name: "Outlook", Icon: OutlookIcon },
  { name: "Acrobat Reader", Icon: AcrobatIcon, open: true },
  { name: "Paint", Icon: PaintIcon, open: true },
];

const stars = [
  [44, 8, 3], [262, 18, 2], [538, 6, 3], [592, 6, 4], [504, 50, 3], [304, 80, 3], [354, 86, 2], [628, 70, 2], [812, 24, 2],
  [958, 62, 4], [1058, 6, 2], [1114, 8, 2], [1162, 86, 5], [1350, 48, 2], [1514, 4, 3], [1625, 30, 3], [1644, 54, 3], [1700, 20, 2],
  [1850, 64, 2], [2010, 40, 3], [2190, 76, 2], [2262, 10, 3], [2396, 92, 4], [2436, 90, 4], [2460, 76, 3], [2866, 84, 3], [3045, 15, 4], [3180, 68, 3],
];

function Taskbar() {
  return (
    <footer className="relative flex h-[100px] shrink-0 justify-between bg-[#040304]">
      <svg aria-hidden="true" className="absolute inset-0 h-full w-full" fill="#3c4850">
        {stars.map(([x, y, r]) => (
          <circle key={x} cx={x} cy={y} r={r} opacity="0.45" />
        ))}
      </svg>
      <div className="relative flex">
        {[
          ["Start", WindowsIcon],
          ["Search", SearchIcon],
          ["Task View", TaskViewIcon],
        ].map(([name, Icon]) => (
          <button key={name} aria-label={name} className="grid w-[120px] place-items-center">
            <Icon />
          </button>
        ))}
        <div className="ml-[7px] flex gap-[3px]">
          {pinned.map(({ name, Icon, open, active }) => (
            <button
              key={name}
              aria-label={name}
              className={`flex w-[121px] flex-col items-center ${active ? "bg-[#383838]" : ""}`}
            >
              <span className="grid h-[95px] place-items-center pt-[5px]">
                <Icon />
              </span>
              {(open || active) && <span className={`h-[5px] bg-[#76b9ed] ${active ? "w-full" : "w-[101px]"}`} />}
            </button>
          ))}
        </div>
      </div>
      <div className="relative flex items-center text-white">
        <div className="flex items-center gap-[41px]">
          <button aria-label="Help">
            <svg className="mt-2 h-[54px] w-[54px]" viewBox="0 0 54 54" fill="none">
              <circle cx="27" cy="27" r="24" fill="#0a96db" stroke="#fff" strokeWidth="5" />
              <path d="M19 19C19 9 36 9 36 19C36 26 27 25 27 34" stroke="#fff" strokeWidth="6" />
              <circle cx="27" cy="41" r="4" fill="#fff" />
            </svg>
          </button>
          <button aria-label="Show hidden icons">
            <svg className="h-[34px] w-[34px]" viewBox="0 0 34 34" fill="none" stroke="#fff" strokeWidth="2.500">
              <path d="M1 23L17 7L33 23" />
            </svg>
          </button>
          <button aria-label="Battery">
            <svg className="h-7 w-[42px]" viewBox="0 0 42 28" fill="none" stroke="#fff" strokeWidth="2.500">
              <path d="M14 6H38V26H11M38 11H40.500V20H38" />
              <path d="M13 10H34V22H11V17L13 15Z" fill="#fff" stroke="none" />
              <path d="M3 0V6M9 0V6M1 6H11V13Q6 17 1 13ZM6 15V27" strokeWidth="2" />
            </svg>
          </button>
          <button aria-label="Wi-Fi" className="flex w-[37px] justify-end">
            <svg className="mt-1 h-8 w-8" viewBox="0 0 32 32" fill="none" stroke="#fff" strokeWidth="2.500">
              <path d="M2 31C2 14 14 2 31 2M10 31C10 19 19 10 31 10M18 31C18 23 23 18 31 18" />
              <circle cx="28" cy="28" r="3.500" fill="#fff" stroke="none" />
            </svg>
          </button>
          <button aria-label="Volume">
            <svg className="h-9 w-[42px]" viewBox="0 0 42 36" fill="none" stroke="#fff" strokeWidth="2.500">
              <path d="M1 11H7L15 4V32L7 25H1ZM21 12Q25 18 21 24M27 7Q34 18 27 29M33 2Q44 18 33 34" />
            </svg>
          </button>
        </div>
        <div className="ml-[33px] flex items-center gap-8">
          <button aria-label="Touch keyboard">
            <svg className="h-10 w-[70px]" viewBox="0 0 70 40" fill="none" stroke="#fff">
              <rect x="2" y="2" width="66" height="36" rx="2" strokeWidth="3.500" />
              <path d="M9 11H61" strokeWidth="3" strokeDasharray="3 3" />
              <path d="M9 20H18M52 20H61M9 29H18M22 29H48M52 29H61" strokeWidth="3" />
              <path d="M21 20H50" strokeWidth="3" strokeDasharray="3 3" />
            </svg>
          </button>
          <span className="w-14 text-center text-[28px]">ENG</span>
          <time className="flex w-[136px] flex-col items-center whitespace-nowrap pt-[3px] text-[28px] leading-[47px]">
            <span>5:21 PM</span>
            <span>2/12/2016</span>
          </time>
        </div>
        <button aria-label="3 new notifications" className="relative ml-[47px] h-[60px] w-[60px]">
          <svg viewBox="0 0 60 60">
            <path d="M0 10H40V44H20L12 51V44H0Z" fill="#fff" />
            <path d="M8 19H32M8 27H32M8 35H32" stroke="#000" strokeWidth="2" />
            <circle cx="38" cy="48" r="20" fill="#444" fillOpacity="0.900" stroke="#9a9a9a" strokeWidth="2" />
          </svg>
          <span className="absolute left-[18px] top-7 w-10 text-center text-[26px] font-semibold leading-10">3</span>
        </button>
        <div className="ml-[31px] mr-2.5 h-full w-0.5 bg-[#7a7a7a]" />
      </div>
    </footer>
  );
}

export default function App() {
  return (
    <div className='flex h-screen flex-col overflow-hidden bg-black font-["Open_Sans",sans-serif]'>
      <TabStrip />
      <Toolbar />
      <div className="flex min-h-0 flex-1">
        <Page />
        <VerticalScrollbar />
      </div>
      <HorizontalScrollbar />
      <Taskbar />
    </div>
  );
}
